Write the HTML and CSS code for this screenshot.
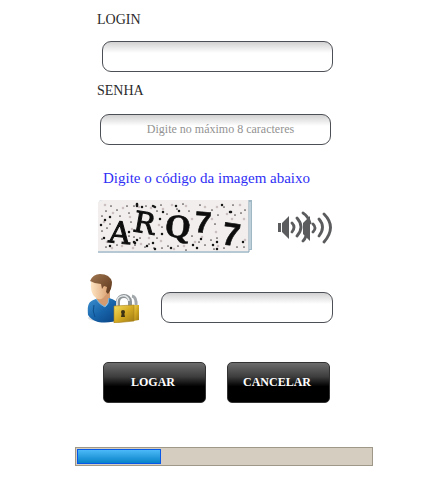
FILE: index.html
```html
<!DOCTYPE html>
<html lang="pt-BR">
<head>
<meta charset="utf-8">
<meta name="viewport" content="width=device-width, initial-scale=1">
<title>Login</title>
<link rel="stylesheet" href="styles.css">
</head>
<body>
<main>
  <form class="login">
    <div class="field">
      <label for="login">LOGIN</label>
      <input class="box box-login" id="login" type="text">
    </div>
    <div class="field">
      <label for="senha">SENHA</label>
      <input class="box box-senha" id="senha" type="password" maxlength="8" placeholder="Digite no máximo 8 caracteres">
    </div>
    <label class="hint" for="codigo">Digite o código da imagem abaixo</label>
    <div class="captcha-row">
      <svg class="captcha" viewBox="0 0 154 53" role="img" aria-label="Captcha">
        <defs>
          <filter id="soft" x="-5%" y="-5%" width="110%" height="110%"><feGaussianBlur stdDeviation=".45"/></filter>
        </defs>
        <path d="M1 2Q1 0 4 0H154V50H151V53H0V4z" fill="#b5c8d3"/>
        <path d="M0 3Q1 0 5 0H151V51H0z" fill="#f1eeed"/>
        <path d="M151 0V52M153 0V50" stroke="#8ba6b6" stroke-width="1"/>
        <path d="M152 2V49" stroke="#dce9ef"/>
        <g filter="url(#soft)" fill="none" stroke-linecap="round">
          <path stroke="#cbbfc0" stroke-width="2.6" d="M7 5h0M15 13h0M25 8h0M32 17h0M41 7h0M53 8h0M65 9h0M74 5h0M88 6h0M94 19h0M107 7h0M119 7h0M129 14h0M142 5h0M146 19h0M6 22h0M9 42h0M14 48h0M34 29h0M43 44h0M51 38h0M63 41h0M61 25h0M76 49h0M86 46h0M97 42h0M104 37h0M118 32h0M120 46h0M114 19h0M147 40h0M134 19h0M35 48h0M24 46h0"/>
          <path stroke="#4b4648" stroke-width="1.7" d="M4 16h0M8 11h0M13 6h0M19 10h0M22 16h0M29 6h0M31 13h0M36 6h0M48 6h0M59 11h0M63 5h0M69 14h0M79 9h0M85 4h0M91 11h0M102 5h0M114 10h0M120 15h0M126 7h0M135 5h0M137 15h0M147 10h0M4 31h0M9 28h0M4 39h0M8 47h0M19 45h0M31 36h0M36 37h0M37 45h0M47 47h0M51 44h0M59 38h0M64 48h0M70 46h0M80 46h0M88 50h0M94 36h0M101 42h0M107 45h0M113 40h0M117 24h0M119 38h0M126 48h0M139 47h0M146 47h0M64 27h0M33 22h0M91 25h0M116 49h0M143 13h0M12 24h0M42 38h0M56 48h0"/>
          <path stroke="#171517" stroke-width="2.5" d="M7 20h0M12 17h0M39 4l0 2M44 7h0M55 6l2 1M65 12h0M78 6h0M81 11h0M124 5h0M132 12l1 0M3 25h0M6 38h0M12 46h0M31 32h0M36 42l1 1M39 40h0M49 46h0M55 43h0M57 49h0M64 34h0M73 48h0M95 45h0M99 48h0M103 39h0M115 45h0M119 42h0M119 49h0M145 42h0M29 43h0M62 19h0"/>
        </g>
        <g class="glyphs" filter="url(#soft)">
          <text transform="translate(10 42) rotate(6)" font-size="30" class="slab">A</text>
          <text transform="translate(34 31) rotate(10)" font-size="29" class="slab">R</text>
          <text transform="translate(66 36) rotate(6)" font-size="33">Q</text>
          <text transform="translate(96 32) rotate(4)" font-size="30" class="plain">7</text>
          <text transform="translate(123 44) rotate(8)" font-size="32" class="plain">7</text>
        </g>
      </svg>
      <button class="sound" type="button" aria-label="Ouvir o código">
        <svg viewBox="0 0 56 36" fill="none" stroke="#5b5c5e">
          <path d="M1 14h3v9H1zM5 14l7-7v23l-7-7zM26 14l7-7v25l-7-7z" fill="#5b5c5e" stroke="none"/>
          <path stroke-width="2.8" stroke-linecap="round" d="M15 14q4 4 0 9M20 9q8 9 0 18M26 4q5 3 7 10M26 32q2-2 3-5M36 15q4 4 0 8M42 10q7 8 0 17M47 5q13 13 0 28"/>
        </svg>
      </button>
    </div>
    <div class="code-row">
      <svg class="user" viewBox="0 0 54 51" aria-hidden="true">
        <defs>
          <linearGradient id="shirt" x2="1" y2="1"><stop stop-color="#3c91d1"/><stop offset=".5" stop-color="#1763a9"/><stop offset="1" stop-color="#083f7d"/></linearGradient>
          <linearGradient id="skin" x2="1"><stop stop-color="#ffe5c3"/><stop offset="1" stop-color="#d79c6c"/></linearGradient>
          <linearGradient id="hair" x2="1" y2="1"><stop stop-color="#a17750"/><stop offset="1" stop-color="#5b351b"/></linearGradient>
          <linearGradient id="gold" x2="1" y2="1"><stop stop-color="#f6df63"/><stop offset=".5" stop-color="#d5ab24"/><stop offset="1" stop-color="#9c7812"/></linearGradient>
        </defs>
        <ellipse cx="20" cy="46" rx="19" ry="4" fill="#c9cdd1" opacity=".6"/>
        <path d="M10 22L9 29l8 7 6-8V16z" fill="#d49b70"/>
        <path d="M1 43C0 32 2 29 9 27q4 6 9 8 4-3 4-9 8 2 11 8v13q-10 5-22 3-7-2-10-7z" fill="url(#shirt)"/>
        <path d="M9 27q4 6 9 8 4-3 4-9" fill="none" stroke="#70b5e5"/>
        <path d="M7 33q-2 6 1 12" fill="none" stroke="#0d4f8e"/>
        <path d="M4 10Q3 21 8 25q4 4 8 1 6-5 7-15L14 4z" fill="url(#skin)"/>
        <path d="M3 9Q6 2 13 2q10 0 12 8 0 7-4 12l-2-2 1-5-3-1-2 3-1-5Q8 12 3 9z" fill="url(#hair)"/>
        <path d="M45 24q5 1 4 11" fill="none" stroke="#a1a7aa" stroke-width="3"/>
        <path d="M45 33h7v15l-6 1z" fill="url(#gold)"/>
        <path d="M31 35v-5c0-8 12-8 12 0v5" fill="none" stroke="#8d9498" stroke-width="4"/>
        <path d="M30 34v-4c0-8 12-8 12-1" fill="none" stroke="#e6e9e9" stroke-width="1.5"/>
        <path d="M27 34l20-1v16l-20 2z" fill="url(#gold)" stroke="#a7811d" stroke-width=".6"/>
        <circle cx="36" cy="40" r="2" fill="#3d3213"/><path d="M35 40h2l1 5h-4z" fill="#3d3213"/>
      </svg>
      <input class="box box-code" id="codigo" type="text">
    </div>
    <div class="actions">
      <button class="btn" type="submit">LOGAR</button>
      <button class="btn" type="button">CANCELAR</button>
    </div>
    <div class="progress" role="progressbar" aria-label="Progresso" aria-valuenow="29" aria-valuemin="0" aria-valuemax="100"><div class="bar" style="width:28.5%"></div></div>
  </form>
</main>
</body>
</html>
```

FILE: styles.css
```css
* { box-sizing: border-box; }
body {
  margin: 0;
  background: #fff;
  color: #2b2b2b;
  font-family: "Liberation Serif", "Times New Roman", serif;
}
main { padding: 10px 61px 16px 75px; }
.login { display: flex; flex-direction: column; }
.field {
  display: flex;
  flex-direction: column;
  gap: 11px;
  margin: 0 40px 9px 22px;
  font-size: 14px;
  line-height: 20px;
}
.box {
  min-width: 0;
  height: 31px;
  padding: 0 20px;
  border: 1px solid #4c4f55;
  border-radius: 9px;
  background: linear-gradient(#d2d2d2, #fff 38%);
  font: 12px "Liberation Serif", serif;
  text-align: center;
}
.box::placeholder { color: #929292; opacity: 1; }
.box-login { margin-left: 5px; }
.box-senha { margin: 2px 2px 0 3px; padding-left: 30px; }
.hint {
  margin: 14px 0 12px 28px;
  color: #2f2ff5;
  font-size: 15px;
  line-height: 20px;
}
.captcha-row {
  display: flex;
  align-items: center;
  justify-content: space-between;
  margin: 0 40px 19px 23px;
}
.captcha { width: 154px; height: 53px; }
.glyphs {
  fill: #111;
  stroke: #111;
  stroke-width: .6px;
  font-family: "Liberation Serif", serif;
  font-weight: bold;
}
.glyphs .plain { font-family: "Liberation Sans", sans-serif; }
.glyphs .slab { font-family: "DejaVu Serif", serif; font-weight: normal; stroke-width: 1px; }
.sound {
  width: 56px;
  height: 36px;
  padding: 0;
  border: 0;
  background: none;
}
.sound svg { display: block; width: 100%; }
.code-row {
  display: flex;
  align-items: flex-end;
  gap: 20px;
  margin: 0 40px 39px 12px;
}
.user { flex: none; width: 54px; height: 51px; }
.box-code { flex: 1; }
.actions {
  display: grid;
  grid-template-columns: 1fr 1fr;
  gap: 21px;
  margin: 0 43px 44px 28px;
}
.btn {
  height: 41px;
  padding: 0 3px 0 0;
  border: 1px solid #333;
  border-radius: 5px;
  background: linear-gradient(#6d6d6d, #3d3d3d 35%, #000 60%);
  color: #fff;
  font: bold 12px "Liberation Serif", serif;
}
.progress {
  height: 19px;
  padding: 1px;
  border: 1px solid #9f9788;
  background: #d5cdc0;
}
.bar {
  height: 100%;
  border: 1px solid #0757e8;
  background: linear-gradient(#4cb9f7, #0783c8);
}
```
